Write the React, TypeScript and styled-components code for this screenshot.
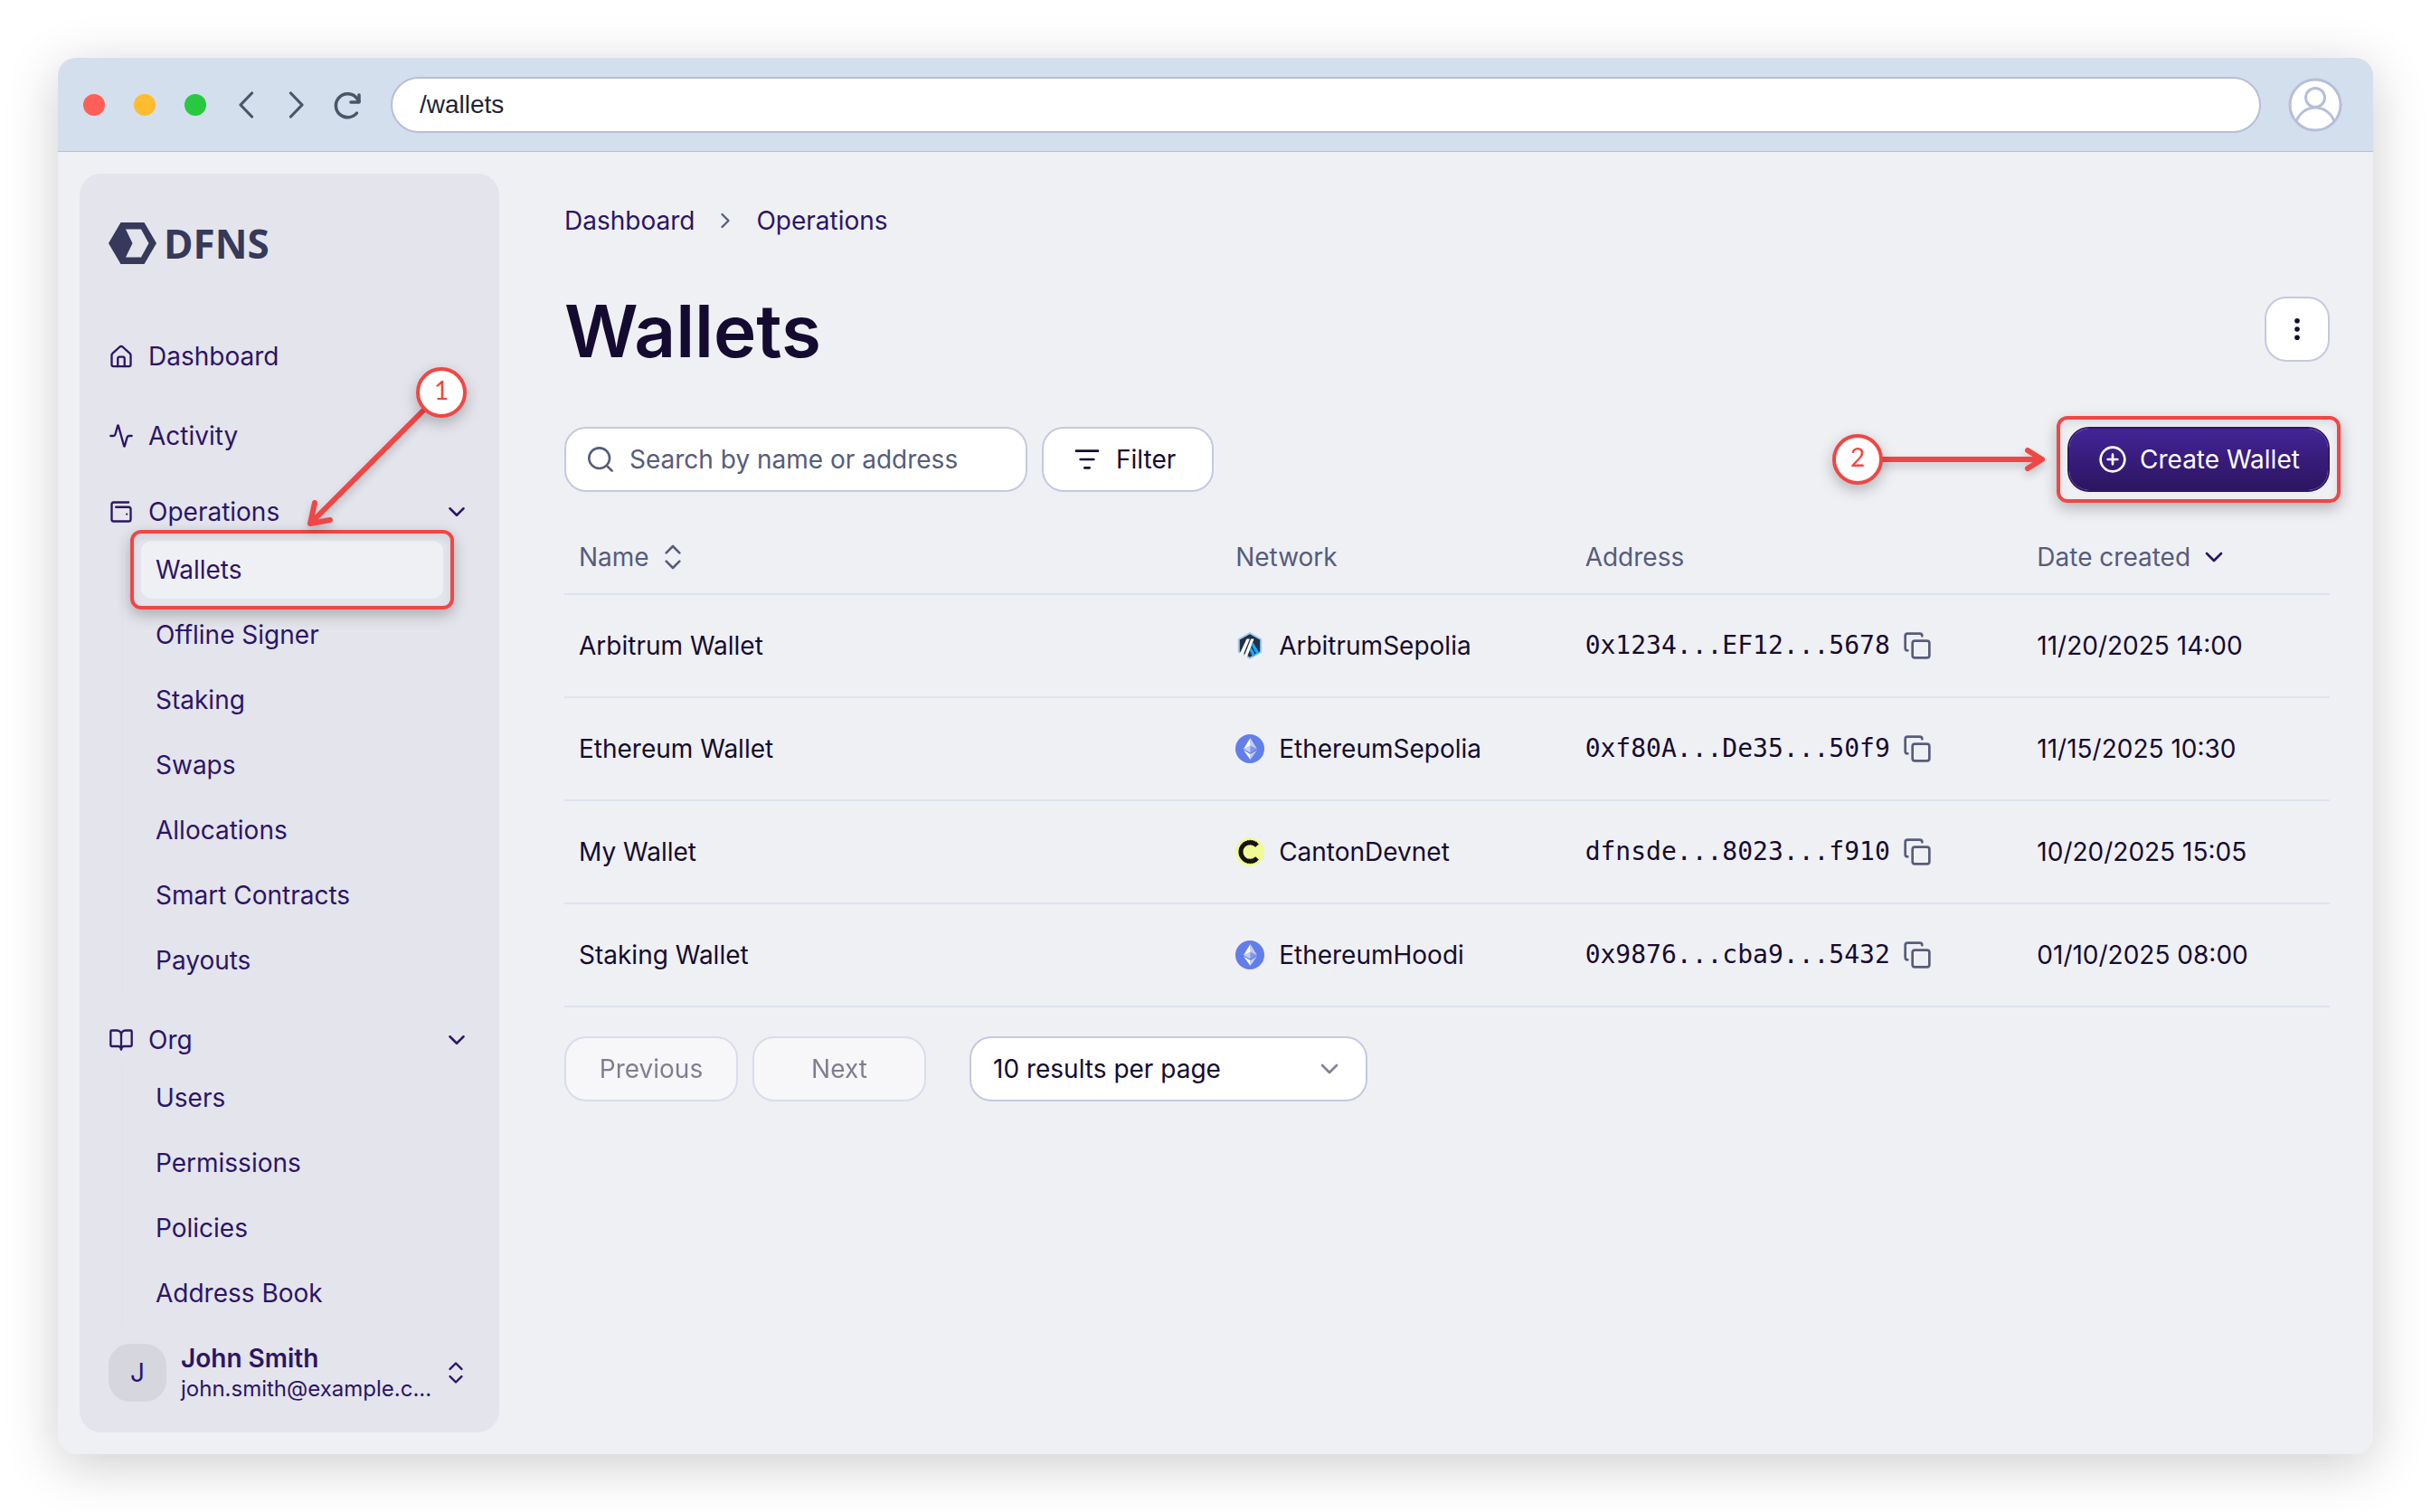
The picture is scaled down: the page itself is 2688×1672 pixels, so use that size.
import React from "react";
import styled, { createGlobalStyle } from "styled-components";
import { Activity, BookOpen, ChevronDown, ChevronRight, Copy } from "lucide-react";

const color = {
  page: "#ffffff",
  surface: "#eff0f4",
  sidebar: "#e4e4ec",
  chrome: "#d3dfec",
  chromeLine: "#b4bfd6",
  nav: "#2c1566",
  ink: "#150b30",
  muted: "#575c7c",
  border: "#c4c9df",
  rule: "#dde3ee",
  red: "#f04646",
};

const sans = `Inter, "Liberation Sans", sans-serif`;
const mono = `"DejaVu Sans Mono", "Liberation Mono", monospace`;

const GlobalStyle = createGlobalStyle`
  *, *::before, *::after { box-sizing: border-box; }
  body { margin: 0; background: ${color.page}; }
  #root { font: 400 28px/40px ${sans}; color: ${color.ink}; }
  button, input, select { font: inherit; color: inherit; margin: 0; }
  button { cursor: pointer; }
  a { color: inherit; text-decoration: none; }
  ul, ol { list-style: none; margin: 0; padding: 0; }
  svg { display: block; flex: none; }
`;

/* ---------- Browser frame ---------- */

const Page = styled.div`
  padding: 64px;
`;

const Browser = styled.div`
  display: flex;
  flex-direction: column;
  min-height: calc(100vh - 128px);
  border-radius: 20px;
  background: ${color.surface};
  box-shadow: 0 12px 60px rgba(0, 0, 0, 0.2);
`;

const TitleBar = styled.header`
  display: flex;
  align-items: center;
  height: 104px;
  padding: 0 34px 0 28px;
  border-bottom: 1px solid ${color.chromeLine};
  border-radius: 20px 20px 0 0;
  background: ${color.chrome};
`;

const Lights = styled.div`
  display: flex;
  gap: 32px;
`;

const Light = styled.span<{ $color: string }>`
  width: 24px;
  height: 24px;
  border-radius: 50%;
  background: ${(p) => p.$color};
`;

const ChromeButtons = styled.div`
  display: flex;
  gap: 16px;
  margin: 0 28px 0 24px;
`;

const ChromeButton = styled.button`
  display: grid;
  place-items: center;
  width: 40px;
  height: 40px;
  padding: 0;
  border: 0;
  background: none;
  color: #4c5466;
`;

const AddressBar = styled.input`
  flex: 1;
  min-width: 0;
  height: 62px;
  padding: 0 30px;
  border: 2px solid #b6bed8;
  border-radius: 31px;
  background: #fff;
  color: #1d2536;
  font-family: "Liberation Sans", Arial, sans-serif;
  outline: 0;
`;

const ProfileButton = styled(ChromeButton)`
  width: 60px;
  height: 60px;
  margin-left: 30px;
`;

/* ---------- Sidebar ---------- */

const Body = styled.div`
  display: flex;
  flex: 1;
  padding: 24px 48px 24px 24px;
`;

const Sidebar = styled.aside`
  display: flex;
  flex-direction: column;
  flex: none;
  width: 464px;
  padding: 52px 32px 32px;
  border-radius: 24px;
  background: ${color.sidebar};
  color: ${color.nav};
`;

const Brand = styled.a`
  display: flex;
  align-items: center;
  gap: 8px;
  height: 50px;
  margin-bottom: 68px;
  color: #363959;
  font: 700 44px/50px "Open Sans", "Noto Sans", sans-serif;
`;

const Nav = styled.nav`
  display: flex;
  flex-direction: column;
  gap: 24px;
`;

const NavLink = styled.a`
  display: flex;
  align-items: center;
  gap: 16px;
  height: 64px;
`;

const GroupButton = styled.button`
  display: flex;
  align-items: center;
  gap: 16px;
  width: 100%;
  height: 56px;
  padding: 0;
  border: 0;
  background: none;
`;

const Grow = styled.span`
  flex: 1;
  text-align: left;
`;

const SubList = styled.ul`
  display: flex;
  flex-direction: column;
  gap: 8px;
  margin: 0 30px 0 14px;
  padding: 4px 0 4px 20px;
  border-left: 2px solid #dfe3ee;
`;

const SubItem = styled.li`
  position: relative;
`;

const SubLink = styled.a<{ $active?: boolean }>`
  display: flex;
  align-items: center;
  height: 64px;
  padding: 0 16px;
  border-radius: 12px;
  background: ${(p) => (p.$active ? color.surface : "transparent")};
`;

const UserButton = styled.button`
  display: flex;
  align-items: center;
  gap: 16px;
  margin-top: auto;
  padding: 0 2px 0 0;
  border: 0;
  background: none;
  text-align: left;
`;

const Avatar = styled.span`
  display: grid;
  place-items: center;
  flex: none;
  width: 64px;
  height: 64px;
  border-radius: 24px;
  background: #d6d6df;
`;

const UserText = styled.span`
  flex: 1;
  min-width: 0;
  white-space: nowrap;
`;

const UserName = styled.span`
  display: block;
  font-weight: 600;
  line-height: 36px;
`;

const UserMail = styled.span`
  display: block;
  font-size: 24px;
  line-height: 32px;
`;

/* ---------- Main ---------- */

const Main = styled.main`
  flex: 1;
  min-width: 0;
  padding: 32px 0 0 72px;
`;

const Breadcrumb = styled.ol`
  display: flex;
  align-items: center;
  color: ${color.nav};
`;

const Crumb = styled.li`
  display: flex;
  align-items: center;
`;

const CrumbArrow = styled(ChevronRight)`
  margin: 0 20px;
  color: ${color.muted};
`;

const TitleRow = styled.div`
  display: flex;
  align-items: flex-start;
  justify-content: space-between;
  margin-top: 64px;
`;

const Title = styled.h1`
  margin: 0;
  font-size: 80px;
  font-weight: 600;
  line-height: 76px;
`;

const Toolbar = styled.div`
  display: flex;
  gap: 16px;
  margin-top: 68px;
`;

const Button = styled.button`
  display: flex;
  align-items: center;
  justify-content: center;
  gap: 16px;
  min-width: 72px;
  height: 72px;
  padding: 0;
  border: 2px solid ${color.border};
  border-radius: 24px;
  background: #fff;
  white-space: nowrap;

  &:disabled {
    opacity: 0.5;
    cursor: default;
  }
`;

const FilterButton = styled(Button)`
  justify-content: flex-start;
  width: 190px;
  padding-left: 32px;
`;

const PageButton = styled(Button)`
  width: 192px;
`;

const CreateButton = styled(Button)`
  justify-content: flex-start;
  width: 290px;
  padding-left: 32px;
  gap: 14px;
  border-color: #2f176a;
  background: linear-gradient(#432496, #2c1560) padding-box;
  color: #fff;
`;

const CreateSlot = styled.div`
  position: relative;
  margin-left: auto;
`;

const SearchBox = styled.label`
  display: flex;
  align-items: center;
  gap: 16px;
  width: 512px;
  height: 72px;
  padding: 0 22px;
  border: 2px solid ${color.border};
  border-radius: 24px;
  background: #fff;
  color: ${color.muted};
`;

const SearchInput = styled.input`
  flex: 1;
  min-width: 0;
  padding: 0;
  border: 0;
  background: none;
  outline: 0;

  &::placeholder {
    color: ${color.muted};
    opacity: 1;
  }
`;

const Table = styled.table`
  width: 100%;
  margin-top: 32px;
  border-collapse: separate;
  border-spacing: 0;
  table-layout: fixed;
`;

const Head = styled.th<{ $width?: string }>`
  width: ${(p) => p.$width ?? "auto"};
  height: 82px;
  padding: 0 16px;
  border-bottom: 2px solid ${color.rule};
  color: ${color.muted};
  font-weight: 400;
  text-align: left;
`;

const Cell = styled.td`
  height: 114px;
  padding: 0 16px;
  border-bottom: 2px solid ${color.rule};
  white-space: nowrap;
`;

const Inline = styled.span<{ $gap?: number }>`
  display: flex;
  align-items: center;
  gap: ${(p) => p.$gap ?? 16}px;
`;

const SortButton = styled.button`
  display: flex;
  align-items: center;
  gap: 10px;
  padding: 0;
  border: 0;
  background: none;
`;

const Mono = styled.span`
  font-family: ${mono};
`;

const CopyButton = styled.button`
  padding: 0;
  border: 0;
  background: none;
  color: ${color.muted};
`;

const Pager = styled.div`
  display: flex;
  gap: 16px;
  margin-top: 32px;
`;

const SelectBox = styled.div`
  display: grid;
  align-items: center;
  width: 440px;
  margin-left: 32px;

  & > * {
    grid-area: 1 / 1;
  }

  & > svg {
    justify-self: end;
    margin-right: 26px;
    color: #858198;
    pointer-events: none;
  }
`;

const Select = styled.select`
  width: 100%;
  height: 72px;
  padding: 0 24px;
  border: 2px solid ${color.border};
  border-radius: 24px;
  background: #fff;
  appearance: none;
`;

/* ---------- Callouts laid over the page ---------- */

const Outline = styled.span`
  position: absolute;
  inset: -12px;
  border: 4px solid ${color.red};
  border-radius: 12px;
  box-shadow: 0 6px 16px rgba(0, 0, 0, 0.25), inset 0 4px 10px rgba(0, 0, 0, 0.08);
  pointer-events: none;
`;

const Badge = styled.span<{ $left: number; $top: number }>`
  position: absolute;
  left: ${(p) => p.$left}px;
  top: ${(p) => p.$top}px;
  width: 56px;
  height: 56px;
  border: 4px solid ${color.red};
  border-radius: 50%;
  background: #fff;
  box-shadow: 0 6px 16px rgba(0, 0, 0, 0.25);
  color: ${color.red};
  font: 400 28px/42px Lato, sans-serif;
  text-align: center;
`;

const Arrow = styled.svg<{ $left: number; $top: number }>`
  position: absolute;
  left: ${(p) => p.$left}px;
  top: ${(p) => p.$top}px;
  overflow: visible;
  fill: none;
  stroke: ${color.red};
  stroke-width: 6;
  stroke-linecap: round;
  stroke-linejoin: round;
  filter: drop-shadow(0 5px 5px rgba(0, 0, 0, 0.2));
  pointer-events: none;
`;

/* ---------- Icons ---------- */

const Stroke = ({ size = 28, width = 2, children }: { size?: number; width?: number; children: React.ReactNode }) => (
  <svg
    width={size}
    height={size}
    viewBox="0 0 24 24"
    fill="none"
    stroke="currentColor"
    strokeWidth={width}
    strokeLinecap="round"
    strokeLinejoin="round"
    aria-hidden="true"
  >
    {children}
  </svg>
);

const HomeIcon = () => (
  <Stroke>
    <path d="M3 10.8a2 2 0 0 1 .7-1.5l7-6.3a2 2 0 0 1 2.6 0l7 6.3a2 2 0 0 1 .7 1.5V20a1.6 1.6 0 0 1-1.6 1.6H4.6A1.6 1.6 0 0 1 3 20z" />
    <path d="M8.8 21.6V14a1.4 1.4 0 0 1 1.4-1.4h3.6a1.4 1.4 0 0 1 1.4 1.4v7.6" />
  </Stroke>
);

const WalletIcon = () => (
  <Stroke>
    <path d="M19 3H5a2 2 0 0 0-2 2v14a2 2 0 0 0 2 2h14a2 2 0 0 0 2-2V9.500a2 2 0 0 0-2-2H7" />
    <path d="M17.3 14.2h.01" />
  </Stroke>
);

const SortIcon = ({ size = 32 }: { size?: number }) => (
  <Stroke size={size}>
    <path d="m6.5 8.500 5.500-5.500 5.500 5.500" />
    <path d="m6.5 15.500 5.500 5.500 5.500-5.500" />
  </Stroke>
);

const ReloadIcon = () => (
  <svg width="34" height="34" viewBox="1 0 34 34" fill="none" stroke="currentColor" strokeWidth="3.5" strokeLinecap="round" strokeLinejoin="round" aria-hidden="true">
    <path d="M28.5 26A13 13 0 1 1 27.500 8.500L31 13" />
    <path d="M31 6v8h-9" />
  </svg>
);

const ProfileIcon = () => (
  <svg width="60" height="60" viewBox="0 0 60 60" fill="none" stroke="#b6bed8" strokeWidth="3" aria-hidden="true">
    <circle cx="30" cy="30" r="28" fill="#fff" />
    <circle cx="30" cy="22" r="10.5" />
    <path d="M9 48.5a22 22 0 0 1 42 0" />
  </svg>
);

const LogoMark = () => (
  <svg width="53" height="46" viewBox="0 0 53 46" aria-hidden="true">
    <path
      fill="currentColor"
      fillRule="evenodd"
      d="M13.5 0h26L53 23 39.500 46h-26L0 23zM19 7.500l7.500 15.500L19 38.500h17L44.500 23 36 7.500z"
    />
  </svg>
);

const EthereumIcon = () => (
  <svg width="32" height="32" viewBox="0 0 32 32" aria-hidden="true">
    <circle cx="16" cy="16" r="16" fill="#627eea" />
    <g fill="#fff">
      <path fillOpacity=".602" d="M16.498 4v8.870l7.497 3.350z" />
      <path d="M16.498 4L9 16.220l7.498-3.350z" />
      <path fillOpacity=".602" d="M16.498 21.968v6.027L24 17.616z" />
      <path d="M16.498 27.995v-6.028L9 17.616z" />
      <path fillOpacity=".2" d="M16.498 20.573l7.497-4.353-7.497-3.348z" />
      <path fillOpacity=".602" d="M9 16.220l7.498 4.353v-7.701z" />
    </g>
  </svg>
);

const ArbitrumIcon = () => (
  <svg width="32" height="32" viewBox="0 0 32 32" aria-hidden="true">
    <path d="M16 1l13.2 7.500v15L16 31 2.800 23.500v-15z" fill="#9dcced" />
    <path d="M16 3.3l11.200 6.300v12.800L16 28.700 4.800 22.400V9.600z" fill="#213147" />
    <path d="M19.8 12.500l1.800 3.300 4.800 8-3 1.800-5.400-9.600zM17.300 17.300l4.700 9.200-3.200 1.500-3-7z" fill="#12aaff" />
    <path d="M12.5 8.500h3.400L8.300 27 4.800 24.800zM17.200 8.500h3.400L12.800 28.800l-3-1.500z" fill="#fff" />
  </svg>
);

const CantonIcon = () => (
  <svg width="32" height="32" viewBox="0 0 32 32" fill="none" aria-hidden="true">
    <circle cx="16" cy="16" r="16" fill="#f1fa95" />
    <path d="M24 9.2A10.300 10.300 0 1 0 24 22.800" stroke="#14150f" strokeWidth="5" />
    <path d="M23.5 5.800A12.300 12.300 0 0 0 9 6M23.500 26.200A12.300 12.300 0 0 1 9 26" stroke="#14150f" strokeWidth="1.5" strokeDasharray="1.2 1.2" />
  </svg>
);

const KebabIcon = () => (
  <svg width="28" height="28" viewBox="0 0 28 28" fill="currentColor" aria-hidden="true">
    <circle cx="14" cy="4.7" r="2.8" />
    <circle cx="14" cy="14" r="2.8" />
    <circle cx="14" cy="23.3" r="2.8" />
  </svg>
);

/* ---------- Data ---------- */

const groups = [
  {
    label: "Operations",
    icon: <WalletIcon />,
    items: ["Wallets", "Offline Signer", "Staking", "Swaps", "Allocations", "Smart Contracts", "Payouts"],
  },
  { label: "Org", icon: <BookOpen size={28} />, items: ["Users", "Permissions", "Policies", "Address Book"] },
];

const wallets = [
  { name: "Arbitrum Wallet", icon: <ArbitrumIcon />, network: "ArbitrumSepolia", address: "0x1234...EF12...5678", date: "11/20/2025 14:00" },
  { name: "Ethereum Wallet", icon: <EthereumIcon />, network: "EthereumSepolia", address: "0xf80A...De35...50f9", date: "11/15/2025 10:30" },
  { name: "My Wallet", icon: <CantonIcon />, network: "CantonDevnet", address: "dfnsde...8023...f910", date: "10/20/2025 15:05" },
  { name: "Staking Wallet", icon: <EthereumIcon />, network: "EthereumHoodi", address: "0x9876...cba9...5432", date: "01/10/2025 08:00" },
];

const WalletsCallout = () => (
  <>
    <Outline />
    <Arrow $left={184} $top={-144} width="130" height="128" viewBox="0 0 130 128">
      <path d="M128 0 3 125M8 102 3 125l22-4" />
    </Arrow>
    <Badge $left={304} $top={-192}>1</Badge>
  </>
);

const CreateCallout = () => (
  <>
    <Outline />
    <Arrow $left={-206} $top={22} width="182" height="28" viewBox="0 0 182 28">
      <path d="M0 14h178M162 4l16 10-16 10" />
    </Arrow>
    <Badge $left={-260} $top={8}>2</Badge>
  </>
);

export default function App() {
  return (
    <Page>
      <GlobalStyle />
      <Browser>
        <TitleBar>
          <Lights>
            <Light $color="#ff5f57" />
            <Light $color="#febc2e" />
            <Light $color="#28c840" />
          </Lights>
          <ChromeButtons>
            <ChromeButton aria-label="Back">
              <svg width="18" height="30" viewBox="0 0 18 30" fill="none" stroke="currentColor" strokeWidth="3.2" strokeLinecap="round" strokeLinejoin="round">
                <path d="M15.5 2 3 15l12.500 13" />
              </svg>
            </ChromeButton>
            <ChromeButton aria-label="Forward">
              <svg width="18" height="30" viewBox="0 0 18 30" fill="none" stroke="currentColor" strokeWidth="3.2" strokeLinecap="round" strokeLinejoin="round">
                <path d="M2.5 2 15 15 2.500 28" />
              </svg>
            </ChromeButton>
            <ChromeButton aria-label="Reload">
              <ReloadIcon />
            </ChromeButton>
          </ChromeButtons>
          <AddressBar aria-label="Address" defaultValue="/wallets" />
          <ProfileButton aria-label="Profile">
            <ProfileIcon />
          </ProfileButton>
        </TitleBar>

        <Body>
          <Sidebar>
            <Brand href="#">
              <LogoMark />
              DFNS
            </Brand>
            <Nav>
              <NavLink href="#dashboard">
                <HomeIcon />
                Dashboard
              </NavLink>
              <NavLink href="#activity">
                <Activity size={28} />
                Activity
              </NavLink>
              {groups.map((group) => (
                <div key={group.label}>
                  <GroupButton aria-expanded="true">
                    {group.icon}
                    <Grow>{group.label}</Grow>
                    <ChevronDown size={30} />
                  </GroupButton>
                  <SubList>
                    {group.items.map((item) => (
                      <SubItem key={item}>
                        <SubLink href="#" $active={item === "Wallets"}>
                          {item}
                        </SubLink>
                        {item === "Wallets" && <WalletsCallout />}
                      </SubItem>
                    ))}
                  </SubList>
                </div>
              ))}
            </Nav>
            <UserButton>
              <Avatar>J</Avatar>
              <UserText>
                <UserName>John Smith</UserName>
                <UserMail>john.smith@example.c...</UserMail>
              </UserText>
              <SortIcon size={28} />
            </UserButton>
          </Sidebar>

          <Main>
            <Breadcrumb>
              <Crumb>
                <a href="#dashboard">Dashboard</a>
                <CrumbArrow size={28} />
              </Crumb>
              <Crumb>
                <a href="#operations">Operations</a>
              </Crumb>
            </Breadcrumb>

            <TitleRow>
              <Title>Wallets</Title>
              <Button aria-label="More actions">
                <KebabIcon />
              </Button>
            </TitleRow>

            <Toolbar>
              <SearchBox>
                <Stroke size={32}>
                  <circle cx="11" cy="11" r="8.5" />
                  <path d="m17.5 17.500 4 4" />
                </Stroke>
                <SearchInput aria-label="Search" placeholder="Search by name or address" />
              </SearchBox>
              <FilterButton>
                <Stroke size={32}>
                  <path d="M3 5h18M6.500 12h11M10 19h4" />
                </Stroke>
                Filter
              </FilterButton>
              <CreateSlot>
                <CreateButton>
                  <Stroke size={32}>
                    <circle cx="12" cy="12" r="10" />
                    <path d="M12 8v8M8 12h8" />
                  </Stroke>
                  Create Wallet
                </CreateButton>
                <CreateCallout />
              </CreateSlot>
            </Toolbar>

            <Table>
              <thead>
                <tr>
                  <Head $width="37.2%">
                    <SortButton>
                      Name
                      <SortIcon />
                    </SortButton>
                  </Head>
                  <Head $width="19.8%">Network</Head>
                  <Head $width="25.6%">Address</Head>
                  <Head>
                    <SortButton>
                      Date created
                      <ChevronDown size={32} color={color.nav} />
                    </SortButton>
                  </Head>
                </tr>
              </thead>
              <tbody>
                {wallets.map((wallet) => (
                  <tr key={wallet.name}>
                    <Cell>{wallet.name}</Cell>
                    <Cell>
                      <Inline>
                        {wallet.icon}
                        {wallet.network}
                      </Inline>
                    </Cell>
                    <Cell>
                      <Inline $gap={14}>
                        <Mono>{wallet.address}</Mono>
                        <CopyButton aria-label={`Copy address of ${wallet.name}`}>
                          <Copy size={32} />
                        </CopyButton>
                      </Inline>
                    </Cell>
                    <Cell>{wallet.date}</Cell>
                  </tr>
                ))}
              </tbody>
            </Table>

            <Pager>
              <PageButton disabled>Previous</PageButton>
              <PageButton disabled>Next</PageButton>
              <SelectBox>
                <Select aria-label="Results per page">
                  <option>10 results per page</option>
                  <option>25 results per page</option>
                  <option>50 results per page</option>
                </Select>
                <ChevronDown size={32} />
              </SelectBox>
            </Pager>
          </Main>
        </Body>
      </Browser>
    </Page>
  );
}
